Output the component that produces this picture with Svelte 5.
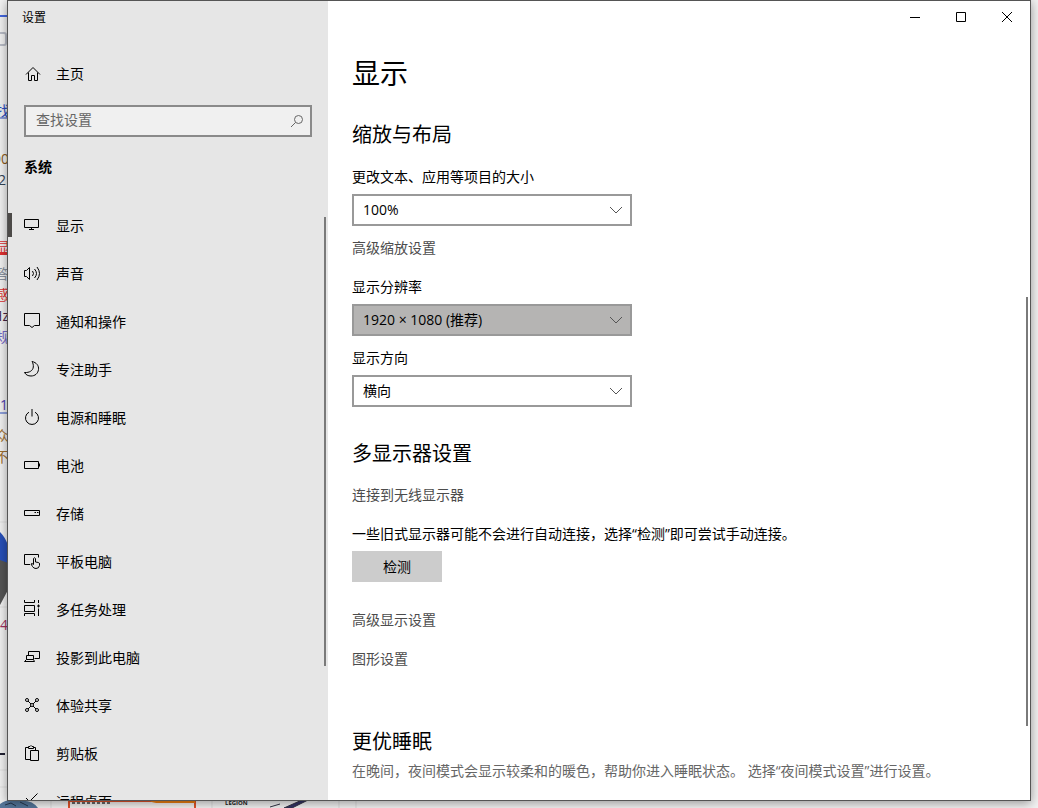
<script>
  const icons = {
    home: ['M2 9.5L9 2.5l7 7', 'M4.5 7.5v8h3v-5h3v5h3v-8'],
    display: ['M.5 3.5h14v8h-14z', 'M7.5 11.5v2M5 13.5h5'],
    sound: ['M.5 6.5h2L5.5 3.5v12l-3-3h-2z', 'M8.5 7q2 2.5 0 5M10.5 5q4 4.5 0 9M13 3q5 6.5 0 13'],
    notify: ['M.5 1.5h15v12h-5l-2.5 2-2.5-2h-5z'],
    moon: ['M8 1.5c4.5 1 7 4.2 6.5 8-.5 4-3.5 6.5-7.5 6.5-3 0-5.2-1.2-6.5-3.5 5 .4 8.5-2 8.8-5.5.2-2-.3-4-1.3-5.5z'],
    power: ['M5 4.2a6.5 6.5 0 1 0 6 0', 'M8 1v7.5'],
    battery: ['M.5 5.5h14v7h-14z', 'M15.5 7.5v3'],
    storage: ['M.5 6.5h15v5h-15z', 'M10.5 8.5h1.5M13 8.5h1.5'],
    tablet: [
      'M6 12.5H.5v-10h14v3',
      'M9.5 12.5v-6q1-1.5 2 0v3.5l3 .5q1 .3 1 1.5v1.5q-.5 3-3.5 3-2.5 0-3.5-2l-1.5-2.5q.7-1.2 2.5.5z'
    ],
    tasks: ['M.5 0v2.5h10V0M.5 16v-2.5h10V16', 'M.5 5.5h10v6H.5z', 'M14.5 0v3M14.5 8.5v7.5M13 6h3M14.5 4.5v3'],
    project: ['M4.5 7V3.5h11v7h-5', 'M2.5 7.5h7v4h-7zM2.5 11.5l-2 2h10l-1-2'],
    share: [
      'M4 5l3 3M12 5l-3 3M7 10l-3 3M9 10l3 3',
      'M1.5 4a1.5 1.5 0 1 0 3 0a1.5 1.5 0 1 0-3 0M11.5 4a1.5 1.5 0 1 0 3 0a1.5 1.5 0 1 0-3 0',
      'M1.5 14a1.5 1.5 0 1 0 3 0a1.5 1.5 0 1 0-3 0M11.5 14a1.5 1.5 0 1 0 3 0a1.5 1.5 0 1 0-3 0',
      'M6.5 9a1.5 1.5 0 1 0 3 0a1.5 1.5 0 1 0-3 0'
    ],
    clipboard: ['M6 15.5H1.5v-12h3M9.5 3.5h2v3', 'M4.5 4.5v-2h1.5q1-2 2 0h1.5v2z', 'M6.5 6.5h8v10h-8z'],
    remote: ['M13.5 1.5L6.5 8.5l4 4', 'M2 6l5 5-5 5']
  };

  const items = [
    { icon: 'display', label: '显示' },
    { icon: 'sound', label: '声音' },
    { icon: 'notify', label: '通知和操作' },
    { icon: 'moon', label: '专注助手' },
    { icon: 'power', label: '电源和睡眠' },
    { icon: 'battery', label: '电池' },
    { icon: 'storage', label: '存储' },
    { icon: 'tablet', label: '平板电脑' },
    { icon: 'tasks', label: '多任务处理' },
    { icon: 'project', label: '投影到此电脑' },
    { icon: 'share', label: '体验共享' },
    { icon: 'clipboard', label: '剪贴板' },
    { icon: 'remote', label: '远程桌面' }
  ];

  let active = $state('display');
  let query = $state('');
</script>

{#snippet icon(name)}
  <svg class="icon" viewBox="0 0 18 18" aria-hidden="true">
    {#each icons[name] as d}
      <path {d} />
    {/each}
  </svg>
{/snippet}

{#snippet dropdown(id, label, options, dark)}
  <label class="field-label" for={id}>{label}</label>
  <div class="dropdown" class:dark>
    <select {id}>
      {#each options as option}
        <option>{option}</option>
      {/each}
    </select>
    <svg class="chevron" viewBox="0 0 12 8" aria-hidden="true"><path d="M0 1l6 6 6-6" /></svg>
  </div>
{/snippet}

<div class="desktop">
  <!-- web page showing around the window edges -->
  <svg class="behind-left" viewBox="0 0 8 808" aria-hidden="true">
    <path d="M0 16h8" stroke="#4468e0" stroke-width="2" />
    <path d="M0 33h4q2 0 2 2v8q0 2-2 2H0" fill="none" stroke="#b8bcc6" stroke-width="2" />
    <path d="M0 118h8M0 413h8" stroke="#2a4cc0" />
    <path d="M0 254h8" stroke="#e03030" stroke-width="2" />
    <path d="M0 754h5" stroke="#223" stroke-width="2" />
    <path d="M0 522h8M0 607h8M0 770h8M0 787h8" stroke="#e0e0e0" />
    <path d="M0 532q5 5 8 13v20H0z" fill="#2850b8" />
    <path d="M0 560l8 3v27l-8 15z" fill="#555" />
    <g font-size="14" text-anchor="end">
      <text x="10" y="116" fill="#2a4cc0">找</text>
      <text x="9" y="164" fill="#8a5a20">00</text>
      <text x="6" y="185" fill="#345">2</text>
      <text x="10" y="252" fill="#e03030">显</text>
      <text x="9" y="279" fill="#8a93a0">答</text>
      <text x="9" y="300" fill="#e03030">感</text>
      <text x="9" y="321" fill="#424">Hz</text>
      <text x="10" y="342" fill="#7468c8">规</text>
      <text x="8" y="410" fill="#5040b0">1</text>
      <text x="9" y="441" fill="#a07030">众</text>
      <text x="9" y="462" fill="#a07030">不</text>
      <text x="8" y="630" fill="#a03060">4</text>
    </g>
  </svg>
  <svg class="behind-bottom" viewBox="0 0 400 8" aria-hidden="true">
    <path d="M0 8V4q8-6 18-3 14-2 20 7z" fill="#55769a" />
    <path d="M5 5l6-2 5 3M20 2l8 4" stroke="#26364c" fill="none" />
    <path d="M51 0v8M212 0v8M339 0v8M356 0v8" stroke="#ddd" />
    <path d="M69 8V1h126v7" fill="#f4f0ee" stroke="#e2532a" stroke-width="2" />
    <path d="M72 3h40" stroke="#666" stroke-width="2" stroke-dasharray="3 2" />
    <path d="M150 1h45v2h-36q-6 0-9-2z" fill="#f08010" />
    <text x="225" y="5" font-size="6" font-weight="700" fill="#222">LEGION</text>
    <path d="M270 7l10-3M284 8l18-8h6l-16 8z" stroke="#334" fill="#336" />
  </svg>

  <div class="window">
    <aside class="sidebar">
      <div class="window-title">设置</div>
      <a class="home" href="#home">{@render icon('home')}<span>主页</span></a>
      <div class="search">
        <input type="text" placeholder="查找设置" aria-label="查找设置" bind:value={query} />
        <svg viewBox="0 0 14 14" aria-hidden="true">
          <circle cx="8.5" cy="5.5" r="4" />
          <path d="M5.5 8.5L1 13" />
        </svg>
      </div>
      <h2 class="category">系统</h2>
      <nav>
        {#each items as item}
          <a
            class="nav-item"
            class:active={active === item.icon}
            href="#{item.icon}"
            onclick={() => (active = item.icon)}
          >
            {@render icon(item.icon)}
            <span>{item.label}</span>
          </a>
        {/each}
      </nav>
      <div class="thumb side-thumb"></div>
    </aside>

    <main>
      <div class="caption">
        <button aria-label="最小化">
          <svg viewBox="0 0 10 10"><path d="M0 5.5h10" /></svg>
        </button>
        <button aria-label="最大化">
          <svg viewBox="0 0 10 10"><path d="M.5.5h9v9h-9z" /></svg>
        </button>
        <button aria-label="关闭">
          <svg viewBox="0 0 10 10"><path d="M0 0l10 10M10 0L0 10" /></svg>
        </button>
      </div>

      <div class="content">
        <h1>显示</h1>

        <section class="scale">
          <h2>缩放与布局</h2>
          {@render dropdown('scale', '更改文本、应用等项目的大小', ['100%', '125%', '150%'], false)}
          <a class="link near" href="#scaling">高级缩放设置</a>
          {@render dropdown('resolution', '显示分辨率', ['1920 × 1080 (推荐)', '1680 × 1050'], true)}
          {@render dropdown('orientation', '显示方向', ['横向', '纵向'], false)}
        </section>

        <section class="multi">
          <h2>多显示器设置</h2>
          <a class="link wireless" href="#wireless">连接到无线显示器</a>
          <p>一些旧式显示器可能不会进行自动连接，选择“检测”即可尝试手动连接。</p>
          <button class="detect">检测</button>
          <a class="link advanced" href="#advanced">高级显示设置</a>
          <a class="link" href="#graphics">图形设置</a>
        </section>

        <section class="sleep">
          <h2>更优睡眠</h2>
          <p class="hint">在晚间，夜间模式会显示较柔和的暖色，帮助你进入睡眠状态。 选择“夜间模式设置”进行设置。</p>
        </section>
      </div>
      <div class="thumb main-thumb"></div>
    </main>
  </div>
</div>

<style>
  :global(body) {
    overflow: hidden;
  }

  .desktop {
    position: relative;
    box-sizing: border-box;
    height: 100vh;
    padding: 0 7px 7px;
    background: #f2f2f2;
    color: #000;
    font-family: 'Open Sans', 'Noto Sans CJK SC', sans-serif;
    font-size: 14px;
    line-height: 20px;
    overflow: hidden;
  }

  .behind-left {
    position: absolute;
    top: 0;
    left: 0;
    width: 8px;
    height: 808px;
  }

  .behind-bottom {
    position: absolute;
    bottom: 0;
    left: 0;
    width: 400px;
    height: 8px;
  }

  .window {
    position: relative;
    box-sizing: border-box;
    display: flex;
    height: 100%;
    border: 1px solid #555;
    background: #fff;
    box-shadow: 0 2px 10px rgba(0, 0, 0, 0.4);
  }

  a {
    color: inherit;
    text-decoration: none;
  }

  h1,
  h2,
  p {
    margin: 0;
    font-weight: 400;
  }

  .sidebar {
    position: relative;
    display: flex;
    flex-direction: column;
    flex: 0 0 320px;
    background: #e6e6e6;
    overflow: hidden;
  }

  .window-title {
    padding: 7px 14px 5px;
    font-size: 12px;
  }

  .home,
  .nav-item {
    position: relative;
    display: flex;
    flex-shrink: 0;
    align-items: center;
    gap: 14px;
    height: 48px;
    padding: 0 16px;
  }

  .home {
    margin-top: 17px;
  }

  .nav-item span {
    padding-top: 2px;
  }

  .icon {
    flex: none;
    width: 18px;
    height: 18px;
    fill: none;
    stroke: #000;
  }

  .search {
    box-sizing: border-box;
    display: flex;
    flex-shrink: 0;
    align-items: center;
    height: 32px;
    margin: 7px 16px 0;
    padding: 0 6px 0 10px;
    border: 2px solid #8a8a8a;
    background: #f0f0f0;
  }

  .search input {
    flex: 1;
    min-width: 0;
    height: 20px;
    padding: 0 0 2px;
    border: 0;
    outline: 0;
    background: none;
    font: inherit;
  }

  .search input::placeholder {
    color: #666;
    opacity: 1;
  }

  .search svg {
    width: 14px;
    height: 14px;
    fill: none;
    stroke: #666;
  }

  .category {
    margin: 20px 16px 24px;
    font-size: 14px;
    font-weight: 700;
  }

  nav {
    flex: 1;
    min-height: 0;
    overflow: hidden;
  }

  .active::before {
    content: '';
    position: absolute;
    left: 0;
    width: 4px;
    height: 24px;
    background: #4c4a48;
  }

  .thumb {
    position: absolute;
    right: 2px;
    width: 2px;
    background: #7a7a7a;
  }

  .side-thumb {
    top: 216px;
    height: 449px;
  }

  .main-thumb {
    top: 296px;
    height: 429px;
  }

  main {
    position: relative;
    flex: 1;
    min-width: 0;
    overflow: hidden;
  }

  .caption {
    display: flex;
    justify-content: flex-end;
  }

  .caption button {
    display: grid;
    place-items: center;
    width: 46px;
    height: 32px;
    padding: 0;
    border: 0;
    background: none;
  }

  .caption button:hover {
    background: #e5e5e5;
  }

  .caption svg {
    width: 10px;
    height: 10px;
    fill: none;
    stroke: #000;
    overflow: visible;
  }

  .content {
    padding: 22px 24px 0;
  }

  h1 {
    font-size: 28px;
    line-height: 36px;
  }

  main h2 {
    font-size: 20px;
    line-height: 28px;
  }

  .scale {
    margin-top: 30px;
  }

  .multi {
    margin-top: 33px;
  }

  .sleep {
    margin-top: 59px;
  }

  .field-label {
    display: block;
    margin-top: 12px;
  }

  h2 + .field-label {
    margin-top: 18px;
  }

  .link + .field-label {
    margin-top: 19px;
  }

  .dropdown {
    position: relative;
    max-width: 280px;
    margin-top: 7px;
  }

  .dropdown select {
    display: block;
    box-sizing: border-box;
    width: 100%;
    height: 32px;
    padding: 0 30px 0 9px;
    border: 2px solid #999;
    border-radius: 0;
    background: #fff;
    color: #000;
    font: inherit;
    appearance: none;
  }

  .dropdown.dark select {
    background: #b5b4b3;
  }

  .chevron {
    position: absolute;
    top: 12px;
    right: 10px;
    width: 12px;
    height: 8px;
    fill: none;
    stroke: #555;
    pointer-events: none;
  }

  .link {
    display: block;
    width: fit-content;
    margin-top: 19px;
    color: #4c4c4c;
  }

  .link:hover {
    color: #999;
  }

  .link.near {
    margin-top: 12px;
  }

  .link.wireless {
    margin-top: 17px;
  }

  .link.advanced {
    margin-top: 28px;
  }

  .multi p {
    margin-top: 19px;
  }

  .detect {
    display: block;
    width: 90px;
    height: 31px;
    margin-top: 7px;
    padding: 0;
    border: 0;
    background: #ccc;
    color: #000;
    font: inherit;
  }

  .hint {
    margin-top: 5px;
    color: #666;
  }
</style>
